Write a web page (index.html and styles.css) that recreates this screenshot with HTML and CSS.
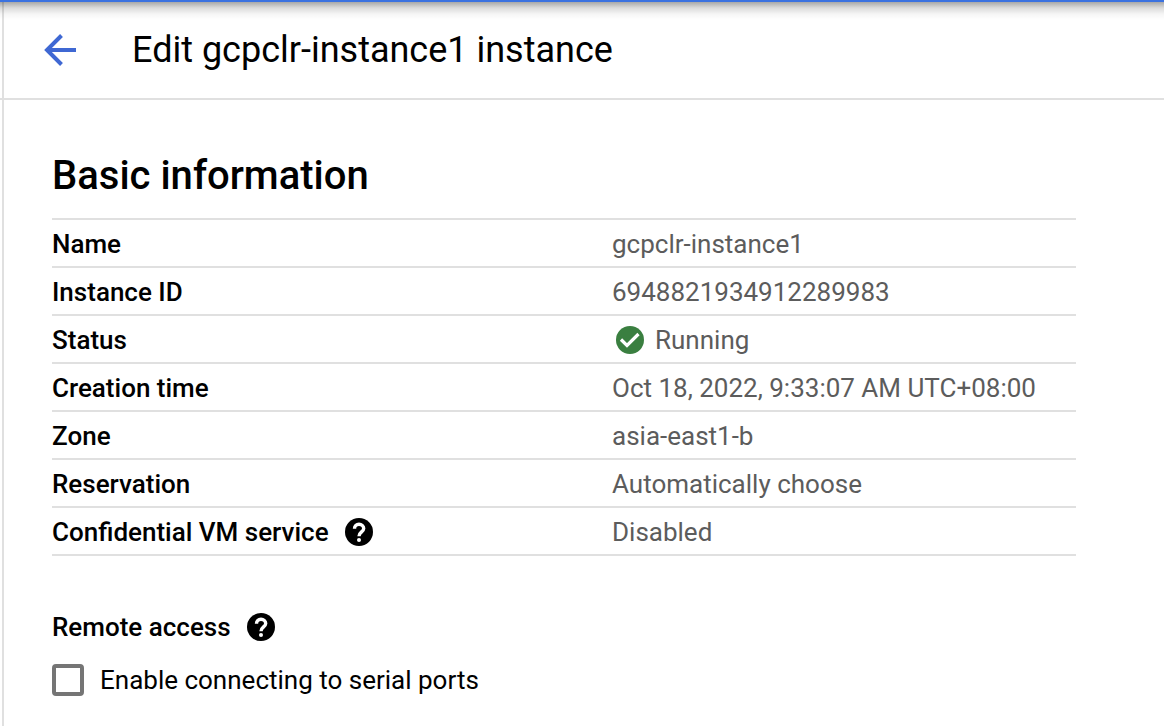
FILE: index.html
```html
<!DOCTYPE html>
<html lang="en">
<head>
<meta charset="utf-8">
<meta name="viewport" content="width=device-width, initial-scale=1">
<title>Edit gcpclr-instance1 instance</title>
<link rel="stylesheet" href="styles.css">
</head>
<body>
<div class="page">
  <header class="toolbar">
    <a class="back" href="#" aria-label="Back">
      <svg viewBox="0 0 32 32" width="32" height="32" fill="none" stroke="currentColor" stroke-width="4"><path d="M32 16H4M17.500 1.500L3 16l14.500 14.500"/></svg>
    </a>
    <h1 class="title">Edit gcpclr-instance1 instance</h1>
  </header>
  <main class="content">
    <h2 class="section-title">Basic information</h2>
    <table class="info">
      <tbody>
        <tr><th scope="row">Name</th><td>gcpclr-instance1</td></tr>
        <tr><th scope="row">Instance ID</th><td>6948821934912289983</td></tr>
        <tr><th scope="row">Status</th><td><span class="status"><svg viewBox="0 0 28 28" width="28" height="28"><circle cx="14" cy="14" r="14" fill="#3a7f40"/><path d="M5 13.500l6 6L22.500 8" fill="none" stroke="#fff" stroke-width="3.200"/></svg>Running</span></td></tr>
        <tr><th scope="row">Creation time</th><td>Oct 18, 2022, 9:33:07 AM UTC+08:00</td></tr>
        <tr><th scope="row">Zone</th><td>asia-east1-b</td></tr>
        <tr><th scope="row">Reservation</th><td>Automatically choose</td></tr>
        <tr><th scope="row"><span class="with-help">Confidential VM service <button class="help" type="button" aria-label="Help: Confidential VM service"><svg viewBox="0 0 28 28" width="28" height="28"><circle cx="14" cy="14" r="14" fill="currentColor"/><path d="M9.500 10.800c0-2.800 1.900-4.500 4.500-4.500s4.700 1.700 4.700 4.200c0 3.200-4.700 3.700-4.700 7.700" fill="none" stroke="#fff" stroke-width="3.400"/><circle cx="14" cy="22" r="2" fill="#fff"/></svg></button></span></th><td>Disabled</td></tr>
      </tbody>
    </table>
    <h3 class="group-title with-help">Remote access <button class="help" type="button" aria-label="Help: Remote access"><svg viewBox="0 0 28 28" width="28" height="28"><circle cx="14" cy="14" r="14" fill="currentColor"/><path d="M9.500 10.800c0-2.800 1.900-4.500 4.500-4.500s4.700 1.700 4.700 4.200c0 3.200-4.700 3.700-4.700 7.700" fill="none" stroke="#fff" stroke-width="3.400"/><circle cx="14" cy="22" r="2" fill="#fff"/></svg></button></h3>
    <label class="check"><input type="checkbox">Enable connecting to serial ports</label>
  </main>
</div>
</body>
</html>
```

FILE: styles.css
```css
* {
  box-sizing: border-box;
}

body {
  margin: 0;
  background: #fff;
  color: #000;
  font-family: Roboto, "Liberation Sans", sans-serif;
  font-size: 26px;
  line-height: 32px;
}

.page {
  min-height: 100vh;
  border-top: 2px solid #3b72e0;
  background:
    linear-gradient(rgba(0, 0, 0, 0.34), rgba(0, 0, 0, 0.14) 6px, rgba(0, 0, 0, 0.04) 12px, transparent 18px) no-repeat,
    linear-gradient(#e0e0e0, #e0e0e0) 2px 0 / 2px 100% no-repeat;
}

.toolbar {
  display: flex;
  align-items: center;
  gap: 56px;
  height: 98px;
  padding-left: 44px;
  border-bottom: 2px solid #e0e0e0;
}

.back {
  display: flex;
  color: #3f68d3;
}

.title {
  margin: 0;
  font-size: 36px;
  font-weight: 400;
  line-height: 48px;
}

.content {
  padding: 51px 88px 24px 52px;
}

.section-title {
  margin: 0 0 17px;
  font-size: 40px;
  font-weight: 500;
  line-height: 50px;
}

.info {
  width: 100%;
  border-collapse: collapse;
  table-layout: fixed;
  border-top: 2px solid #e0e0e0;
}

.info th,
.info td {
  height: 48px;
  padding: 2px 0 0;
  border-bottom: 2px solid #e0e0e0;
  text-align: left;
  white-space: nowrap;
}

.info th {
  width: 560px;
  font-weight: 500;
}

.info td {
  color: #5c5c5c;
}

.status,
.with-help {
  display: flex;
  align-items: center;
}

.status {
  gap: 11px;
  padding-left: 4px;
}

.with-help {
  gap: 16px;
}

.help {
  display: flex;
  padding: 0;
  border: 0;
  background: none;
  color: #000;
}

.group-title {
  margin: 55px 0 21px;
  font-size: 26px;
  font-weight: 500;
}

.check {
  display: flex;
  align-items: center;
  gap: 16px;
}

.check input {
  appearance: none;
  width: 32px;
  height: 32px;
  margin: 0;
  border: 4px solid #757575;
  border-radius: 4px;
  background: #fff;
}

.check input:checked {
  background: #3b66d1;
}
```
